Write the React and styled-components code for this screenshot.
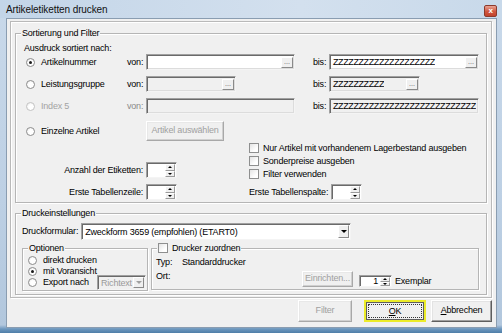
import React from 'react';
import styled, { createGlobalStyle } from 'styled-components';

const GlobalStyle = createGlobalStyle`
  html, body { margin: 0; padding: 0; background: #fff; }
  body {
    font-family: 'Liberation Sans', Arial, sans-serif;
    font-size: 9px;
    letter-spacing: -0.2px;
    color: #000;
  }
  * { box-sizing: border-box; }
`;

const sortRows = [
    { label: 'Artikelnummer', checked: true,
      von: { w: 149, dots: true }, bis: { w: 150, dots: true, value: 'Z'.repeat(20) } },
    { label: 'Leistungsgruppe',
      von: { w: 90, dots: true, disabled: true }, bis: { w: 91, dots: true, disabled: true, value: 'Z'.repeat(10) } },
    { label: 'Index 5', disabled: true,
      von: { w: 149, disabled: true }, bis: { w: 150, disabled: true, value: 'Z'.repeat(28) } },
];

const checks = [
    'Nur Artikel mit vorhandenem Lagerbestand ausgeben',
    'Sonderpreise ausgeben',
    'Filter verwenden',
];

const SpinBox = ({ w, h, value }) => (
    <Spin $w={w} $h={h}>
        <SpinValue>{value}</SpinValue>
        <SpinArrows>
            <SpinArrow $up />
            <SpinArrow />
        </SpinArrows>
    </Spin>
);

const Field = ({ w, dots, disabled, value }) => (
    <TextBox $w={w} $disabled={disabled}>
        <FieldText>{value}</FieldText>
        {dots && <DotsButton>...</DotsButton>}
    </TextBox>
);

const Radio = ({ checked, disabled, children }) => (
    <RadioLabel $disabled={disabled}>
        <RadioMark $checked={checked} $disabled={disabled} />
        {children}
    </RadioLabel>
);

const App = () => {
    return (
        <>
            <GlobalStyle />
            <Window>
                <TitleBar>
                    <Title>Artikeletiketten drucken</Title>
                    <CloseButton>x</CloseButton>
                </TitleBar>
                <Client>
                    <Panel>
                        <Fieldset $mt={6}>
                            <Legend>Sortierung und Filter</Legend>
                            <SortBody>
                                <Heading>Ausdruck sortiert nach:</Heading>
                                <SortRows>
                                    {sortRows.map(row => (
                                        <SortRow key={row.label}>
                                            <Radio checked={row.checked} disabled={row.disabled}>{row.label}</Radio>
                                            <Text $disabled={row.disabled}>von:</Text>
                                            <Field {...row.von} />
                                            <Text>bis:</Text>
                                            <Field {...row.bis} />
                                        </SortRow>
                                    ))}
                                    <SortRow $tall>
                                        <Radio>Einzelne Artikel</Radio>
                                        <span />
                                        <PushButton $w={78} $h={20} disabled>Artikel auswählen</PushButton>
                                    </SortRow>
                                </SortRows>
                                <LowerGrid>
                                    <SpinColumn>
                                        <LabeledSpin>
                                            <Text>Anzahl der Etiketten:</Text>
                                            <SpinBox w={31} h={16} />
                                        </LabeledSpin>
                                        <LabeledSpin>
                                            <Text>Erste Tabellenzeile:</Text>
                                            <SpinBox w={31} h={16} />
                                        </LabeledSpin>
                                    </SpinColumn>
                                    <CheckColumn>
                                        {checks.map(c => (
                                            <CheckRow key={c}>
                                                <CheckMark />
                                                {c}
                                            </CheckRow>
                                        ))}
                                        <LabeledSpin $start>
                                            <Text>Erste Tabellenspalte:</Text>
                                            <SpinBox w={31} h={16} />
                                        </LabeledSpin>
                                    </CheckColumn>
                                </LowerGrid>
                            </SortBody>
                        </Fieldset>

                        <Fieldset $mt={5}>
                            <Legend>Druckeinstellungen</Legend>
                            <PrintBody>
                                <FormRow>
                                    <Text>Druckformular:</Text>
                                    <Combo $w={270} $h={17}>
                                        <ComboText>Zweckform 3659 (empfohlen) (ETART0)</ComboText>
                                        <ComboButton />
                                    </Combo>
                                </FormRow>
                                <OptionsRow>
                                    <Fieldset $w={126}>
                                        <Legend>Optionen</Legend>
                                        <OptionList>
                                            <Radio>direkt drucken</Radio>
                                            <Radio checked>mit Voransicht</Radio>
                                            <ExportRow>
                                                <Radio>Export nach</Radio>
                                                <Combo $w={49} $h={15} $disabled>
                                                    <ComboText $disabled>Richtext</ComboText>
                                                    <ComboButton $disabled />
                                                </Combo>
                                            </ExportRow>
                                        </OptionList>
                                    </Fieldset>
                                    <Fieldset $w={328}>
                                        <Legend>
                                            <CheckMark $inline />
                                            Drucker zuordnen
                                        </Legend>
                                        <PrinterBody>
                                            <InfoRow>
                                                <InfoKey>Typ:</InfoKey>
                                                <Text>Standarddrucker</Text>
                                            </InfoRow>
                                            <PrinterRow>
                                                <OrtLabel>Ort:</OrtLabel>
                                                <PushButton $w={51} $h={16} disabled>Einrichten...</PushButton>
                                                <SpinBox w={33} h={12} value="1" />
                                                <ExemplarText>Exemplar</ExemplarText>
                                            </PrinterRow>
                                        </PrinterBody>
                                    </Fieldset>
                                </OptionsRow>
                            </PrintBody>
                        </Fieldset>
                    </Panel>
                    <ButtonRow>
                        <PushButton $w={54} $h={22} $spaced disabled>Filter</PushButton>
                        <PushButton $w={62} $h={22} $default>
                            <FocusRing><u>O</u>K</FocusRing>
                        </PushButton>
                        <PushButton $w={61} $h={22}><u>A</u>bbrechen</PushButton>
                    </ButtonRow>
                </Client>
            </Window>
        </>
    );
};

const Window = styled.div`
    width: 502px;
    height: 333px;
    display: flex;
    flex-direction: column;
    overflow: hidden;
    background: linear-gradient(to bottom, #c9d9ea 0px, #bdd0e4 200px, #b2c7dd 325px, #6d97be 329px, #4f7ea8 333px);
`;

const TitleBar = styled.div`
    height: 18px;
    flex: none;
    display: flex;
    align-items: center;
    justify-content: space-between;
    padding: 0 5px 0 6px;
    background: linear-gradient(to right, #c3d5e8, #d3e0ee 60%, #c8d9ea);
`;

const Title = styled.div`
    font-size: 10px;
    letter-spacing: -0.1px;
    color: #111;
`;

const CloseButton = styled.div`
    width: 13px;
    height: 12px;
    margin-top: 4px;
    display: flex;
    align-items: center;
    justify-content: center;
    border: 1px solid #8c3a2c;
    border-radius: 2px;
    background: linear-gradient(to bottom, #e9a393, #d0573f 55%, #c2432c);
    color: #fff;
    font-size: 8px;
    font-weight: 700;
    line-height: 1;
`;

const Client = styled.div`
    flex: 1;
    margin: 0 5px 6px 6px;
    display: flex;
    flex-direction: column;
    padding: 2px 4px 0 3px;
    background: #f0f0f0;
    border: 1px solid #8a9db1;
`;

const Panel = styled.div`
    display: flex;
    flex-direction: column;
    padding: 0 4px 2px 4px;
    border: 1px solid #b9b9b9;
    box-shadow: inset 1px 1px 0 #fff, 1px 1px 0 #fff;
`;

const Fieldset = styled.fieldset`
    margin: ${p => p.$mt || 0}px 0 0 0;
    padding: 0;
    min-width: 0;
    width: ${p => p.$w ? p.$w + 'px' : 'auto'};
    border: 1px solid #b5b5b5;
    box-shadow: inset 1px 1px 0 #fff, 1px 1px 0 #fff;
`;

const Legend = styled.legend`
    margin-left: 5px;
    padding: 0 1px;
    height: 11px;
    line-height: 11px;
    background: #f0f0f0;
    white-space: nowrap;
`;

const SortBody = styled.div`
    padding: 4px 0 2px 8px;
`;

const Heading = styled.div`
    line-height: 11px;
`;

const SortRows = styled.div`
    display: flex;
    flex-direction: column;
    gap: 6px;
`;

const SortRow = styled.div`
    display: grid;
    grid-template-columns: 103px 19px 167px 16px 150px;
    align-items: center;
    height: ${p => p.$tall ? 20 : 16}px;
    margin-top: ${p => p.$tall ? 1 : 0}px;
`;

const Text = styled.span`
    line-height: 11px;
    white-space: nowrap;
    color: ${p => p.$disabled ? '#8a8a8a' : '#000'};
`;

const RadioLabel = styled.label`
    display: flex;
    align-items: center;
    height: 11px;
    line-height: 11px;
    white-space: nowrap;
    color: ${p => p.$disabled ? '#a3a3a3' : '#000'};
`;

const RadioMark = styled.span`
    width: 9px;
    height: 9px;
    margin: 0 6px 0 2px;
    flex: none;
    display: flex;
    align-items: center;
    justify-content: center;
    border-radius: 50%;
    border: 1px solid ${p => p.$disabled ? '#c4c4c4' : '#8d8d8d'};
    background: radial-gradient(circle at 60% 60%, #fff 40%, #e6e6e6);
    &::after {
        content: '';
        width: 3px;
        height: 3px;
        border-radius: 50%;
        background: ${p => p.$checked ? '#1a1a1a' : 'transparent'};
    }
`;

const TextBox = styled.div`
    width: ${p => p.$w}px;
    height: 16px;
    display: flex;
    align-items: center;
    justify-content: space-between;
    padding: 0 1px 0 2px;
    overflow: hidden;
    background: ${p => p.$disabled ? '#f0f0f0' : '#fff'};
    border: 1px solid;
    border-color: #a0a0a0 #f4f4f4 #f4f4f4 #a0a0a0;
    box-shadow: inset 1px 1px 0 #6a6a6a, inset -1px -1px 0 #dcdcdc;
`;

const FieldText = styled.span`
    white-space: nowrap;
    overflow: hidden;
    line-height: 11px;
    padding-left: 1px;
    letter-spacing: -0.4px;
`;

const DotsButton = styled.span`
    flex: none;
    width: 12px;
    height: 11px;
    display: flex;
    align-items: flex-end;
    justify-content: center;
    padding-bottom: 2px;
    font-size: 7px;
    letter-spacing: 0;
    color: #555;
    background: #f0f0f0;
    border: 1px solid;
    border-color: #fff #8a8a8a #8a8a8a #fff;
`;

const PushButton = styled.button`
    width: ${p => p.$w}px;
    height: ${p => p.$h}px;
    margin-right: ${p => p.$spaced ? 7 : 0}px;
    padding: ${p => p.$default ? '1px' : '0'};
    display: flex;
    align-items: stretch;
    justify-content: center;
    font: inherit;
    letter-spacing: inherit;
    line-height: ${p => p.$h - 4}px;
    white-space: nowrap;
    color: ${p => p.disabled ? '#a0a0a0' : '#000'};
    background: #f0f0f0;
    border: ${p => p.$default ? '2px solid #ecec2a' : '1px solid'};
    border-color: ${p => p.$default ? '#ecec2a' : p.disabled ? '#fff #a8a8a8 #a8a8a8 #fff' : '#fff #5e5e5e #5e5e5e #fff'};
    box-shadow: ${p => p.$default
        ? 'inset 0 0 0 1px #5e5e5e'
        : p.disabled ? 'inset -1px -1px 0 #d0d0d0, inset 1px 1px 0 #e8e8e8' : 'inset -1px -1px 0 #a0a0a0, inset 1px 1px 0 #e3e3e3'};
`;

const FocusRing = styled.span`
    flex: 1;
    margin: 1px;
    display: flex;
    align-items: center;
    justify-content: center;
    border: 1px dotted #333;
`;

const LowerGrid = styled.div`
    display: grid;
    grid-template-columns: 225px 1fr;
    align-items: end;
`;

const SpinColumn = styled.div`
    width: 153px;
    display: flex;
    flex-direction: column;
    gap: 6px;
`;

const LabeledSpin = styled.div`
    height: 16px;
    margin-top: ${p => p.$start ? 4 : 0}px;
    display: flex;
    align-items: center;
    justify-content: ${p => p.$start ? 'flex-start' : 'flex-end'};
    gap: 3px;
`;

const CheckColumn = styled.div`
    display: flex;
    flex-direction: column;
`;

const CheckRow = styled.label`
    height: 13px;
    display: flex;
    align-items: center;
    gap: 4px;
    white-space: nowrap;
`;

const CheckMark = styled.span`
    display: inline-block;
    width: 10px;
    height: 10px;
    flex: none;
    vertical-align: -2px;
    margin-right: ${p => p.$inline ? 4 : 0}px;
    background: linear-gradient(135deg, #e4e4e4, #fff 70%);
    border: 1px solid #8e8f8f;
`;

const Spin = styled.div`
    width: ${p => p.$w}px;
    height: ${p => p.$h}px;
    flex: none;
    display: flex;
    background: #fff;
    border: 1px solid;
    border-color: #a0a0a0 #f4f4f4 #f4f4f4 #a0a0a0;
    box-shadow: inset 1px 1px 0 #6a6a6a;
`;

const SpinValue = styled.span`
    flex: 1;
    text-align: right;
    padding-right: 2px;
    line-height: 10px;
    font-size: 9px;
`;

const SpinArrows = styled.div`
    width: 11px;
    display: flex;
    flex-direction: column;
    padding: 1px 1px 0 0;
`;

const SpinArrow = styled.span`
    flex: 1;
    display: flex;
    align-items: center;
    justify-content: center;
    background: #f0f0f0;
    border: 1px solid;
    border-color: #fff #9a9a9a #9a9a9a #fff;
    &::after {
        content: '';
        border-left: 2px solid transparent;
        border-right: 2px solid transparent;
        ${p => p.$up ? 'border-bottom' : 'border-top'}: 2px solid #000;
    }
`;

const PrintBody = styled.div`
    padding: 4px 5px 3px 6px;
`;

const FormRow = styled.div`
    height: 17px;
    display: flex;
    align-items: center;
    gap: 3px;
`;

const Combo = styled.div`
    width: ${p => p.$w}px;
    height: ${p => p.$h}px;
    display: flex;
    align-items: stretch;
    padding: 1px;
    background: ${p => p.$disabled ? '#f0f0f0' : '#fff'};
    border: 1px solid;
    border-color: #a0a0a0 #f4f4f4 #f4f4f4 #a0a0a0;
    box-shadow: inset 1px 1px 0 #6a6a6a;
`;

const ComboText = styled.span`
    flex: 1;
    display: flex;
    align-items: center;
    padding-left: 2px;
    white-space: nowrap;
    overflow: hidden;
    color: ${p => p.$disabled ? '#9a9a9a' : '#000'};
`;

const ComboButton = styled.span`
    width: 11px;
    flex: none;
    display: flex;
    align-items: center;
    justify-content: center;
    background: #f0f0f0;
    border: 1px solid;
    border-color: #fff #8a8a8a #8a8a8a #fff;
    &::after {
        content: '';
        border-left: 3px solid transparent;
        border-right: 3px solid transparent;
        border-top: 3px solid ${p => p.$disabled ? '#a0a0a0' : '#000'};
    }
`;

const OptionsRow = styled.div`
    margin-top: 3px;
    display: flex;
    align-items: flex-start;
    gap: 3px;
`;

const OptionList = styled.div`
    padding: 1px 1px 2px 3px;
    display: flex;
    flex-direction: column;
`;

const ExportRow = styled.div`
    height: 11px;
    display: flex;
    align-items: center;
    justify-content: space-between;
`;

const PrinterBody = styled.div`
    padding: 3px 4px 2px 4px;
    display: flex;
    flex-direction: column;
`;

const InfoRow = styled.div`
    height: 11px;
    display: flex;
    align-items: center;
`;

const InfoKey = styled.span`
    width: 26px;
    line-height: 11px;
`;

const PrinterRow = styled.div`
    margin-top: 3px;
    display: flex;
    align-items: flex-end;
    gap: 6px;
`;

const OrtLabel = styled.span`
    width: 140px;
    align-self: flex-start;
    line-height: 11px;
`;

const ExemplarText = styled.span`
    margin-left: -3px;
    line-height: 11px;
`;

const ButtonRow = styled.div`
    margin-top: 2px;
    padding-bottom: 5px;
    display: flex;
    justify-content: flex-end;
    gap: 5px;
`;

export default App;
